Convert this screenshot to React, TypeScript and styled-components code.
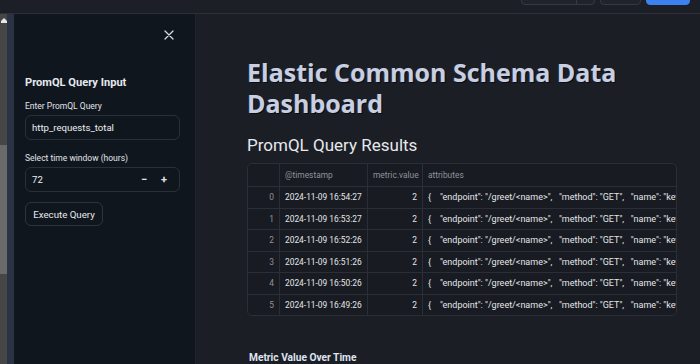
import React from "react";
import styled, { createGlobalStyle } from "styled-components";

const Global = createGlobalStyle`
  html, body { margin: 0; padding: 0; background: #1b1e24; }
  body { font-family: Roboto, "Open Sans", sans-serif; overflow: hidden; }
  #root { width: 700px; height: 364px; overflow: hidden; }
  * { box-sizing: border-box; }
`;

const Page = styled.div`
  width: 700px;
  height: 364px;
  display: flex;
  flex-direction: column;
  background: #1b1e24;
  color: #e6e8ee;
`;

const Header = styled.div`
  height: 14px;
  flex: none;
  display: flex;
  justify-content: flex-end;
  align-items: flex-end;
  gap: 5px;
  padding: 0 10px 8px 0;
  overflow: hidden;
  background: #1c1f26;
  border-bottom: 1px solid #2b2f37;
`;

const HeadButton = styled.div<{ $w: number; $primary?: boolean }>`
  width: ${(p) => p.$w}px;
  height: 30px;
  flex: none;
  border-radius: 4px;
  display: flex;
  background: ${(p) => (p.$primary ? "#3b82f0" : "#1f232b")};
  border: 1px solid ${(p) => (p.$primary ? "#3b82f0" : "#343944")};
`;

const HeadSeg = styled.div`
  flex: 1;
  & + & { flex: none; width: 18px; border-left: 1px solid #343944; }
`;

const Body = styled.div`
  flex: 1;
  display: flex;
  min-height: 0;
`;

const Scrollbar = styled.div`
  width: 7px;
  flex: none;
  background: #464646;
  display: flex;
  flex-direction: column;
  align-items: center;
`;

const ScrollArrow = styled.div`
  margin-top: 4px;
  width: 0;
  height: 0;
  border-left: 3px solid transparent;
  border-right: 3px solid transparent;
  border-bottom: 3px solid #e8e8e8;
  box-shadow: 0 2px 0 #e8e8e8;
`;

const ScrollThumb = styled.div`
  margin-top: 124px;
  width: 7px;
  height: 129px;
  background: #6a6a6a;
`;

const Stripe = styled.div`
  width: 7px;
  flex: none;
  background: #2a3245;
`;

const Sidebar = styled.div`
  width: 182px;
  flex: none;
  background: #10161e;
  border-right: 1px solid #1f242c;
  padding: 0 15px 0 11px;
  display: flex;
  flex-direction: column;
`;

const CloseRow = styled.div`
  display: flex;
  justify-content: flex-end;
  padding: 16px 6px 0 0;
  height: 50px;
`;

const SideTitle = styled.div`
  font-weight: 700;
  font-size: 11.1px;
  color: #e6e9ef;
  margin-top: 11px;
  line-height: 16px;
`;

const Label = styled.div`
  font-size: 8.5px;
  color: #e0e3e8;
  margin-top: 8px;
  line-height: 14px;
`;

const Field = styled.div`
  margin: 2px 0 3px;
  height: 25px;
  border: 1px solid #2a2f38;
  border-radius: 6px;
  background: #10161e;
  display: flex;
  align-items: center;
  padding: 0 5px 0 6px;
  font-size: 9.6px;
  color: #eceef2;
`;

const FieldText = styled.span`
  flex: 1;
`;

const Step = styled.span`
  width: 20px;
  text-align: center;
  font-size: 11px;
  font-weight: 700;
  color: #e0e3e8;
`;

const Button = styled.div`
  margin-top: 7px;
  align-self: flex-start;
  height: 24px;
  width: 78px;
  justify-content: center;
  display: flex;
  align-items: center;
  border: 1px solid #2e333c;
  border-radius: 6px;
  font-size: 9.7px;
  color: #e8eaee;
`;

const Main = styled.div`
  flex: 1;
  min-width: 0;
  padding: 43px 0 0 51px;
  overflow: hidden;
`;

const Title = styled.h1`
  margin: 0;
  font-family: "Open Sans", sans-serif;
  font-weight: 700;
  font-size: 25px;
  line-height: 31px;
  color: #c8cfe2;
  text-shadow: 1px 1px 0 #0a0c10, -1px 0 0 #2a2f3a;
  width: 400px;
`;

const Sub = styled.h2`
  margin: 15px 0 0;
  font-family: Roboto, sans-serif;
  font-weight: 400;
  font-size: 17px;
  line-height: 22px;
  color: #e6e8ee;
`;

const TableBox = styled.div`
  margin-top: 7px;
  width: 430px;
  border: 1px solid #2a2e36;
  border-radius: 5px;
  overflow: hidden;
  background: #181b21;
`;

const Row = styled.div<{ $head?: boolean }>`
  display: grid;
  grid-template-columns: 31px 88px 55px 1fr;
  height: ${(p) => (p.$head ? 22 : 21.5)}px;
  & + & { border-top: 1px solid #2a2e36; }
`;

const Cell = styled.div<{ $align?: string; $dim?: boolean; $size?: number }>`
  display: flex;
  align-items: center;
  justify-content: ${(p) => p.$align || "flex-start"};
  padding: 0 5px;
  font-size: ${(p) => p.$size || 8.4}px;
  white-space: pre;
  overflow: hidden;
  color: ${(p) => (p.$dim ? "#8e939c" : "#e4e6ea")};
  & + & { border-left: 1px solid #2a2e36; }
`;

const ChartTitle = styled.div`
  margin-top: 36px;
  margin-left: 2px;
  font-weight: 700;
  font-size: 10.2px;
  color: #dfe3f0;
`;

const times = [
  "2024-11-09 16:54:27",
  "2024-11-09 16:53:27",
  "2024-11-09 16:52:26",
  "2024-11-09 16:51:26",
  "2024-11-09 16:50:26",
  "2024-11-09 16:49:26",
];

const attr = '{    "endpoint": "/greet/<name>",   "method": "GET",   "name": "kevin" }';

const CloseIcon = () => (
  <svg width="10" height="10" viewBox="0 0 10 10" fill="none" stroke="#d6d9df" strokeWidth="1.3" strokeLinecap="round">
    <path d="M1 1L9 9M9 1L1 9" />
  </svg>
);

export default function App() {
  return (
    <Page>
      <Global />
      <Header>
        <HeadButton $w={74}>
          <HeadSeg />
          <HeadSeg />
        </HeadButton>
        <HeadButton $w={41} />
        <HeadButton $w={44} $primary />
      </Header>
      <Body>
        <Scrollbar>
          <ScrollArrow />
          <ScrollThumb />
        </Scrollbar>
        <Stripe />
        <Sidebar>
          <CloseRow>
            <CloseIcon />
          </CloseRow>
          <SideTitle>PromQL Query Input</SideTitle>
          <Label>Enter PromQL Query</Label>
          <Field>
            <FieldText>http_requests_total</FieldText>
          </Field>
          <Label>Select time window (hours)</Label>
          <Field>
            <FieldText>72</FieldText>
            <Step>−</Step>
            <Step>+</Step>
          </Field>
          <Button>Execute Query</Button>
        </Sidebar>
        <Main>
          <Title>Elastic Common Schema Data Dashboard</Title>
          <Sub>PromQL Query Results</Sub>
          <TableBox>
            <Row $head>
              <Cell />
              <Cell $dim>@timestamp</Cell>
              <Cell $dim>metric.value</Cell>
              <Cell $dim>attributes</Cell>
            </Row>
            {times.map((t, i) => (
              <Row key={t}>
                <Cell $dim $align="flex-end">{i}</Cell>
                <Cell>{t}</Cell>
                <Cell $align="flex-end">2</Cell>
                <Cell $size={9}>{attr}</Cell>
              </Row>
            ))}
          </TableBox>
          <ChartTitle>Metric Value Over Time</ChartTitle>
        </Main>
      </Body>
    </Page>
  );
}
